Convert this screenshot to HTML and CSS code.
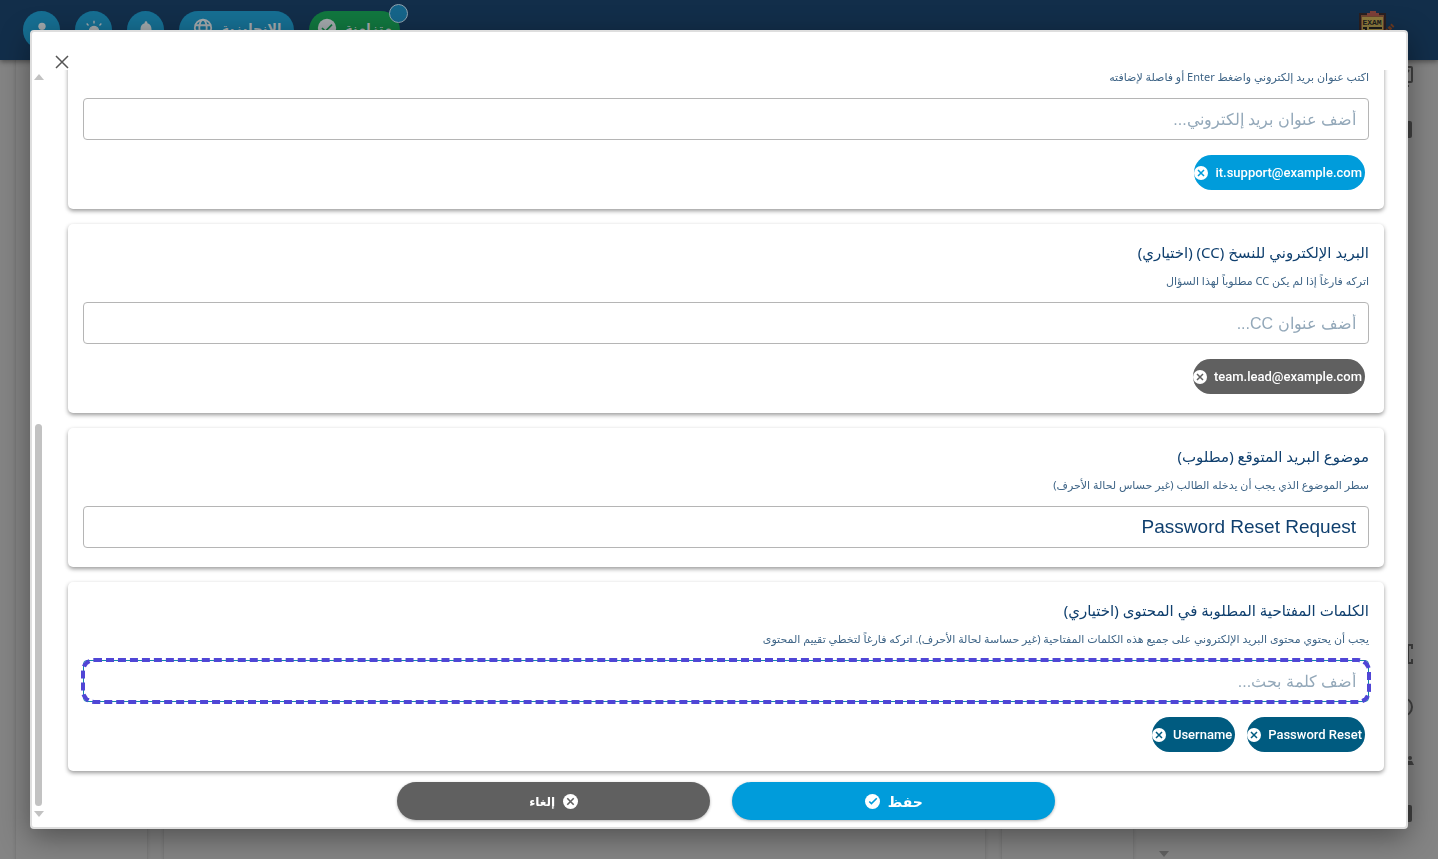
FILE: index.html
```html
<!DOCTYPE html>
<html lang="ar">
<head>
  <meta charset="UTF-8" />
  <meta name="viewport" content="width=device-width, initial-scale=1.0"/>
  <title>إعدادات سؤال البريد</title>
  <link rel="stylesheet" href="styles.css">
</head>
<body>

  <header class="topbar">
    <div class="actions">
      <button class="round-btn" aria-label="الحساب">
        <svg width="22" height="22" viewBox="0 0 24 24" fill="currentColor"><circle cx="12" cy="8" r="4"/><path d="M4 20c0-4 4-6 8-6s8 2 8 6z"/></svg>
      </button>
      <button class="round-btn" aria-label="المظهر">
        <svg width="22" height="22" viewBox="0 0 24 24" fill="currentColor" stroke="currentColor" stroke-width="1.5"><circle cx="12" cy="13" r="5"/><path d="M12 2v3M12 21v3M1 13h3M20 13h3M4 5l2 2M18 19l2 2M4 21l2-2M18 7l2-2"/></svg>
      </button>
      <button class="round-btn" aria-label="الإشعارات">
        <svg width="22" height="22" viewBox="0 0 24 24" fill="currentColor"><path d="M12 22a2 2 0 0 0 2-2h-4a2 2 0 0 0 2 2zm6-6v-5c0-3-1.600-5.600-4.500-6.300V4a1.500 1.500 0 0 0-3 0v.7C7.600 5.400 6 7.900 6 11v5l-2 2v1h16v-1z"/></svg>
      </button>
      <button class="pill-btn">
        <svg width="22" height="22" viewBox="0 0 24 24" fill="none" stroke="currentColor" stroke-width="2"><circle cx="12" cy="12" r="9"/><ellipse cx="12" cy="12" rx="4" ry="9"/><path d="M3 9h18M3 15h18"/></svg>
        الإنجليزية
      </button>
      <button class="pill-btn sync">
        <svg width="20" height="20" viewBox="0 0 24 24"><circle cx="12" cy="12" r="11" fill="currentColor"/><path d="M6 12l4 4 8-8" fill="none" stroke="#11773f" stroke-width="2"/></svg>
        متزامنة
        <span class="badge"></span>
      </button>
    </div>
    <svg class="logo" width="38" height="38" viewBox="0 0 38 38">
      <rect x="2" y="3" width="25" height="35" fill="#6b4430" stroke="#2a1f20" stroke-width="2"/>
      <rect x="4" y="6" width="21" height="30" fill="#8c7a3d"/>
      <path d="M9 5V2h3V0h6v2h3v3z" fill="#7c3f38"/>
      <text x="14" y="14" class="logo-text">EXAM</text>
      <path d="M5 17h3v3M11 17h13M11 20h10" stroke="#1c1c1c" stroke-width="2" fill="none"/>
      <path d="M28 21l7-7" stroke="#6b3a20" stroke-width="4" stroke-dasharray="3 1"/>
    </svg>
  </header>

  <div class="page">
    <div class="col col-side"></div>
    <div class="col col-main"></div>
    <div class="col col-extra"></div>
    <div class="page-scroll"><span class="arrow-down"></span></div>
    <nav class="sidebar">
      <div class="nav-group">
        <svg width="24" height="24" viewBox="0 0 24 24" fill="none" stroke="currentColor" stroke-width="2"><rect x="2" y="3" width="20" height="15" rx="1"/><path d="M8 22h11M14 12l5-6"/></svg>
        <svg width="24" height="24" viewBox="0 0 24 24" fill="currentColor"><rect x="2" y="4" width="20" height="17" rx="2"/></svg>
      </div>
      <div class="nav-group">
        <svg width="24" height="24" viewBox="0 0 24 24" fill="none" stroke="currentColor" stroke-width="2"><path d="M7 3H3v4M17 3h5v4M3 17v4h4M22 17v4h-5"/><rect x="7" y="5" width="11" height="14" fill="currentColor"/></svg>
        <svg width="24" height="24" viewBox="0 0 24 24" fill="none" stroke="currentColor" stroke-width="2"><circle cx="13" cy="12" r="9"/><path d="M13 7v6h4"/></svg>
        <svg width="24" height="24" viewBox="0 0 24 24" fill="currentColor"><circle cx="12" cy="8" r="3"/><circle cx="20" cy="10" r="2"/><path d="M5 17c0-6 11-6 12 0zM18 17v-4h4l2 4z"/></svg>
        <svg width="24" height="24" viewBox="0 0 24 24" fill="currentColor"><rect x="2" y="4" width="20" height="17" rx="2"/></svg>
      </div>
    </nav>
  </div>

  <div class="modal" role="dialog" aria-modal="true" dir="rtl">
    <div class="modal-head">
      <button class="close-btn" aria-label="إغلاق">
        <svg width="14" height="14" viewBox="0 0 14 14" fill="none" stroke="currentColor" stroke-width="1.5"><path d="M1 1l12 12M13 1L1 13"/></svg>
      </button>
    </div>

    <div class="modal-body">
      <form class="content">
        <section class="card">
          <label class="hint" for="toEmail">اكتب عنوان بريد إلكتروني واضغط Enter أو فاصلة لإضافته</label>
          <div class="field"><input type="text" id="toEmail" placeholder="أضف عنوان بريد إلكتروني..."></div>
          <div class="chips">
            <span class="chip chip-blue">it.support@example.com
              <button type="button" aria-label="إزالة"><svg width="14" height="14" viewBox="0 0 14 14"><circle cx="7" cy="7" r="7" fill="#fff"/><path d="M4 4l6 6M10 4l-6 6" stroke="currentColor" stroke-width="1.5"/></svg></button>
            </span>
          </div>
        </section>

        <section class="card">
          <label class="title" for="ccEmail">البريد الإلكتروني للنسخ (CC) (اختياري)</label>
          <p class="hint">اتركه فارغاً إذا لم يكن CC مطلوباً لهذا السؤال</p>
          <div class="field"><input type="text" id="ccEmail" placeholder="أضف عنوان CC..."></div>
          <div class="chips">
            <span class="chip chip-gray">team.lead@example.com
              <button type="button" aria-label="إزالة"><svg width="14" height="14" viewBox="0 0 14 14"><circle cx="7" cy="7" r="7" fill="#fff"/><path d="M4 4l6 6M10 4l-6 6" stroke="currentColor" stroke-width="1.5"/></svg></button>
            </span>
          </div>
        </section>

        <section class="card">
          <label class="title" for="subject">موضوع البريد المتوقع (مطلوب)</label>
          <p class="hint">سطر الموضوع الذي يجب أن يدخله الطالب (غير حساس لحالة الأحرف)</p>
          <div class="field"><input type="text" id="subject" value="Password Reset Request"></div>
        </section>

        <section class="card">
          <label class="title" for="keywords">الكلمات المفتاحية المطلوبة في المحتوى (اختياري)</label>
          <p class="hint">يجب أن يحتوي محتوى البريد الإلكتروني على جميع هذه الكلمات المفتاحية (غير حساسة لحالة الأحرف). اتركه فارغاً لتخطي تقييم المحتوى</p>
          <div class="field active"><input type="text" id="keywords" placeholder="أضف كلمة بحث..."></div>
          <div class="chips">
            <span class="chip chip-teal">Password Reset
              <button type="button" aria-label="إزالة"><svg width="14" height="14" viewBox="0 0 14 14"><circle cx="7" cy="7" r="7" fill="#fff"/><path d="M4 4l6 6M10 4l-6 6" stroke="currentColor" stroke-width="1.5"/></svg></button>
            </span>
            <span class="chip chip-teal">Username
              <button type="button" aria-label="إزالة"><svg width="14" height="14" viewBox="0 0 14 14"><circle cx="7" cy="7" r="7" fill="#fff"/><path d="M4 4l6 6M10 4l-6 6" stroke="currentColor" stroke-width="1.5"/></svg></button>
            </span>
          </div>
        </section>

        <div class="buttons">
          <button type="button" class="btn save">حفظ
            <svg width="15" height="15" viewBox="0 0 14 14"><circle cx="7" cy="7" r="7" fill="#fff"/><path d="M4 7l2 2 5-5" fill="none" stroke="currentColor" stroke-width="1.5"/></svg>
          </button>
          <button type="button" class="btn cancel">
            <svg width="15" height="15" viewBox="0 0 14 14"><circle cx="7" cy="7" r="7" fill="#fff"/><path d="M4 4l6 6M10 4l-6 6" stroke="currentColor" stroke-width="1.5"/></svg>
            إلغاء
          </button>
        </div>
      </form>

      <div class="scrollbar">
        <span class="arrow-up"></span>
        <div class="track"><div class="thumb"></div></div>
        <span class="arrow-down"></span>
      </div>
    </div>
  </div>

</body>
</html>
```
FILE: styles.css
```css
* {
  box-sizing: border-box;
}

body {
  margin: 0;
  height: 100vh;
  overflow: hidden;
  display: flex;
  flex-direction: column;
  background-color: #848484;
  font-family: "Noto Sans", "DejaVu Sans", sans-serif;
}

button {
  border: none;
  padding: 0;
  font-family: inherit;
  cursor: pointer;
}

/* Top bar */
.topbar {
  display: flex;
  justify-content: space-between;
  align-items: center;
  height: 60px;
  padding: 0 42px 0 23px;
  background-color: #122e4a;
  box-shadow: 0 2px 5px rgba(0, 0, 0, 0.4);
  z-index: 1;
}

.actions {
  display: flex;
  gap: 15px;
}

.round-btn,
.pill-btn {
  display: flex;
  align-items: center;
  justify-content: center;
  height: 38px;
  border-radius: 19px;
  background-color: #166f93;
  color: #a3a9ac;
}

.round-btn {
  width: 37px;
}

.pill-btn {
  position: relative;
  gap: 8px;
  width: 115px;
  padding-bottom: 4px;
  font-size: 13px;
  font-weight: bold;
}

.sync {
  width: 91px;
  background-color: #11773f;
}

.badge {
  position: absolute;
  top: -7px;
  right: -8px;
  width: 19px;
  height: 19px;
  border: 1px solid #8fa3b0;
  border-radius: 50%;
  background-color: #15658a;
}

.logo-text {
  font: bold 8px "Liberation Mono", monospace;
  text-anchor: middle;
  fill: #1c1c1c;
}

/* Page behind the dialog */
.page {
  flex: 1;
  display: flex;
  gap: 15px;
  padding-left: 15px;
}

.col {
  border: solid #7a7a7a;
  border-width: 0 1px;
  box-shadow: 0 0 3px rgba(0, 0, 0, 0.1);
}

.col-side {
  flex: 132;
}

.col-main {
  flex: 826;
}

.col-extra {
  flex: 132;
}

.page-scroll {
  display: flex;
  align-items: flex-end;
  justify-content: flex-end;
  width: 20px;
  padding-bottom: 2px;
}

.sidebar {
  display: flex;
  flex-direction: column;
  justify-content: space-between;
  width: 254px;
  padding: 4px 24px 34px 0;
  color: #414141;
}

.nav-group {
  display: flex;
  flex-direction: column;
  align-items: flex-end;
  gap: 29px;
}

/* Dialog */
.modal {
  position: fixed;
  inset: 30px;
  display: flex;
  flex-direction: column;
  border: 2px solid #dedede;
  border-radius: 4px;
  background-color: #fff;
  box-shadow: 0 8px 30px rgba(0, 0, 0, 0.4);
  z-index: 3;
}

.modal-head {
  display: flex;
  align-items: center;
  justify-content: flex-end;
  height: 38px;
  padding: 22px 23px 0;
}

.close-btn {
  display: flex;
  background: none;
  color: #555;
}

.modal-body {
  flex: 1;
  min-height: 0;
  display: flex;
}

.content {
  flex: 1;
  min-width: 0;
  display: flex;
  flex-direction: column;
  justify-content: flex-end;
  gap: 15px;
  padding: 0 22px 7px 23px;
  overflow: hidden;
}

.card {
  flex-shrink: 0;
  padding: 15px 15px 19px;
  border-radius: 5px;
  background-color: #fff;
  box-shadow: 0 2px 4px rgba(0, 0, 0, 0.4);
}

.title {
  display: block;
  font-size: 15px;
  line-height: 26px;
  color: #0f3f6e;
}

.hint {
  display: block;
  margin: 0 0 5px;
  font-size: 11px;
  line-height: 32px;
  color: #3f6587;
}

.field {
  height: 42px;
  border: 1px solid #b5b5b5;
  border-radius: 4px;
}

.field input {
  display: block;
  width: 100%;
  height: 100%;
  padding: 0 12px;
  border: none;
  border-radius: 10px;
  outline: none;
  background: none;
  font-family: "Liberation Sans", Arial, sans-serif;
  font-size: 19px;
  color: #0f3f6e;
}

.field input::placeholder {
  font-size: 16px;
  color: #93a8b9;
  opacity: 1;
}

.active {
  border-color: #1488a8;
}

.field.active input {
  outline: 4px dashed #5046d6;
  outline-offset: -1px;
}

.chips {
  display: flex;
  gap: 12px;
  margin-top: 15px;
  padding: 0 4px;
}

.chip {
  display: flex;
  align-items: center;
  gap: 7px;
  height: 35px;
  padding-right: 3px;
  border-radius: 18px;
  font-family: Roboto, "Noto Sans", sans-serif;
  font-size: 13px;
  font-weight: 500;
  color: #fff;
}

.chip button {
  display: flex;
  background: none;
}

.chip-blue {
  background-color: #009cdb;
}

.chip-gray {
  background-color: #606060;
}

.chip-teal {
  background-color: #005b80;
}

.chip-blue button {
  color: #009cdb;
}

.chip-gray button {
  color: #606060;
}

.chip-teal button {
  color: #005b80;
}

.buttons {
  display: flex;
  gap: 22px;
  width: 50%;
  margin: -4px auto 0;
}

.btn {
  flex: 1 1 auto;
  display: flex;
  align-items: center;
  justify-content: center;
  gap: 8px;
  height: 38px;
  border-radius: 19px;
  box-shadow: 0 1px 3px rgba(0, 0, 0, 0.3);
  font-weight: bold;
  color: #fff;
}

.btn svg {
  color: #606060;
}

.save {
  background-color: #009cdb;
  font-size: 14px;
}

.save svg {
  color: #009cdb;
}

.cancel {
  background-color: #606060;
  font-size: 12px;
}

/* Scrollbar */
.scrollbar {
  display: flex;
  flex-direction: column;
  align-items: center;
  gap: 5px;
  width: 13px;
  padding: 4px 0 10px;
}

.track {
  flex: 1;
  display: flex;
  align-items: flex-end;
}

.thumb {
  width: 7px;
  height: 53%;
  border-radius: 4px;
  background-color: #c2c2c2;
}

.arrow-up,
.arrow-down {
  border: solid transparent;
  border-width: 0 5px;
}

.arrow-up {
  border-bottom: 6px solid #c2c2c2;
}

.arrow-down {
  border-top: 6px solid #c2c2c2;
}

.page-scroll .arrow-down {
  border-top-color: #606060;
}
```
